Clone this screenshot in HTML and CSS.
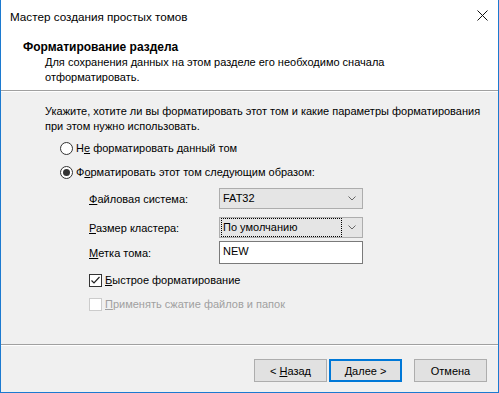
FILE: index.html
```html
<!DOCTYPE html>
<html lang="ru">
<head>
  <meta charset="UTF-8" />
  <title>Мастер создания простых томов</title>
  <link rel="stylesheet" href="styles.css">
</head>
<body>
  <div class="window">
    <div class="titlebar">
      <span class="title">Мастер создания простых томов</span>
      <svg class="close" width="11" height="11" viewBox="0 0 11 11">
        <path d="M0.5 0.5 L10.5 10.5 M10.5 0.5 L0.5 10.5" stroke="#111" stroke-width="1" fill="none" />
      </svg>
    </div>

    <div class="header">
      <div class="header-title">Форматирование раздела</div>
      <div class="header-sub">Для сохранения данных на этом разделе его необходимо сначала<br>отформатировать.</div>
    </div>
    <div class="etched"></div>

    <div class="content">
      <p class="intro">Укажите, хотите ли вы форматировать этот том и какие параметры форматирования<br>при этом нужно использовать.</p>

      <div class="radio-row">
        <span class="radio"></span>
        <span>Н<u>е</u> форматировать данный том</span>
      </div>
      <div class="radio-row">
        <span class="radio checked"></span>
        <span>Ф<u>о</u>рматировать этот том следующим образом:</span>
      </div>

      <div class="form">
        <div class="form-row">
          <label><u>Ф</u>айловая система:</label>
          <div class="combo">
            <span class="combo-text">FAT32</span>
            <svg class="chevron" width="8" height="5" viewBox="0 0 8 5"><path d="M0.5 0.5 L4 4 L7.5 0.5" stroke="#666" fill="none" /></svg>
          </div>
        </div>
        <div class="form-row">
          <label><u>Р</u>азмер кластера:</label>
          <div class="combo">
            <span class="combo-text focused">По умолчанию</span>
            <svg class="chevron" width="8" height="5" viewBox="0 0 8 5"><path d="M0.5 0.5 L4 4 L7.5 0.5" stroke="#666" fill="none" /></svg>
          </div>
        </div>
        <div class="form-row">
          <label><u>М</u>етка тома:</label>
          <div class="edit">NEW</div>
        </div>
      </div>

      <div class="check-row">
        <span class="checkbox">
          <svg width="11" height="11" viewBox="0 0 11 11"><path d="M1.5 5.5 L4 8 L9.5 2" stroke="#222" stroke-width="1.2" fill="none" /></svg>
        </span>
        <span><u>Б</u>ыстрое форматирование</span>
      </div>
      <div class="check-row disabled">
        <span class="checkbox"></span>
        <span><u>П</u>рименять сжатие файлов и папок</span>
      </div>
    </div>

    <div class="etched"></div>
    <div class="footer">
      <button>&lt; <u>Н</u>азад</button>
      <button class="default"><u>Д</u>алее &gt;</button>
      <button class="cancel">Отмена</button>
    </div>
  </div>
</body>
</html>
```

FILE: styles.css
```css
body {
  margin: 0;
  padding: 0;
  font-family: 'Liberation Sans', Arial, sans-serif;
  font-size: 11px;
  color: #000;
  background: #fff;
}

.window {
  width: 499px;
  height: 393px;
  box-sizing: border-box;
  border: 1px solid #1c7ad0;
  border-top: none;
  display: flex;
  flex-direction: column;
  background-color: #f0f0f0;
}

.titlebar {
  height: 30px;
  background: #fff;
  display: flex;
  align-items: center;
  justify-content: space-between;
  padding: 0 9px 0 9px;
}

.title {
  font-size: 11.7px;
  margin-top: 2px;
}

.close {
  margin-right: 1px;
}

.header {
  background: #fff;
  height: 60px;
  box-sizing: border-box;
  padding: 10px 0 0 22px;
  line-height: 15px;
}

.header-title {
  font-weight: bold;
  font-size: 12px;
}

.header-sub {
  padding-left: 22px;
}

.etched {
  height: 1px;
  border-top: 1px solid #a0a0a0;
  background: #fff;
}

.content {
  flex: 1;
  padding: 12px 0 0 44px;
}

.intro {
  margin: 0 0 2px 0;
  line-height: 15px;
}

.radio-row {
  display: flex;
  align-items: center;
  height: 24px;
  padding-left: 15px;
  gap: 3px;
}

.radio {
  width: 11px;
  height: 11px;
  border: 1px solid #333;
  border-radius: 50%;
  background: #fff;
  position: relative;
}

.radio.checked::after {
  content: "";
  position: absolute;
  left: 2px;
  top: 2px;
  width: 7px;
  height: 7px;
  border-radius: 50%;
  background: #333;
}

.form {
  padding: 4px 0 0 44px;
  display: flex;
  flex-direction: column;
}

.form-row {
  display: flex;
  align-items: center;
  height: 21px;
  margin-bottom: 8px;
}

.form-row:nth-child(2) {
  margin-bottom: 3px;
}

.form-row:last-child {
  height: 23px;
  margin-bottom: 0;
}

.form-row label {
  width: 130px;
}

.combo {
  width: 144px;
  height: 21px;
  box-sizing: border-box;
  border: 1px solid #adadad;
  background: #e5e5e5;
  display: flex;
  align-items: center;
  justify-content: space-between;
  padding: 0 6px 0 2px;
}

.combo-text {
  padding: 0 1px;
  line-height: 17px;
}

.combo-text.focused {
  outline: 1px dotted #000;
  outline-offset: 0;
  width: 117px;
}

.edit {
  width: 144px;
  height: 23px;
  box-sizing: border-box;
  border: 1px solid #7a7a7a;
  background: #fff;
  padding: 1px 3px;
  line-height: 17px;
}

.check-row {
  display: flex;
  align-items: center;
  height: 24px;
  padding-left: 44px;
  gap: 3px;
}

.form + .check-row {
  margin-top: 4px;
}

.checkbox {
  width: 11px;
  height: 11px;
  border: 1px solid #333;
  background: #fff;
  display: flex;
  align-items: center;
  justify-content: center;
}

.check-row.disabled {
  color: #a0a0a0;
}

.check-row.disabled .checkbox {
  border-color: #ccc;
}

.footer {
  height: 46px;
  display: flex;
  align-items: flex-start;
  justify-content: flex-end;
  padding: 13px 11px 0 0;
  box-sizing: border-box;
}

button {
  width: 73px;
  height: 23px;
  border: 1px solid #adadad;
  background-color: #e1e1e1;
  font-family: 'Liberation Sans', Arial, sans-serif;
  font-size: 11px;
  color: #000;
  padding: 0;
  margin-left: 2px;
}

button.default {
  border: 2px solid #0078d7;
}

button.cancel {
  margin-left: 12px;
}
```
